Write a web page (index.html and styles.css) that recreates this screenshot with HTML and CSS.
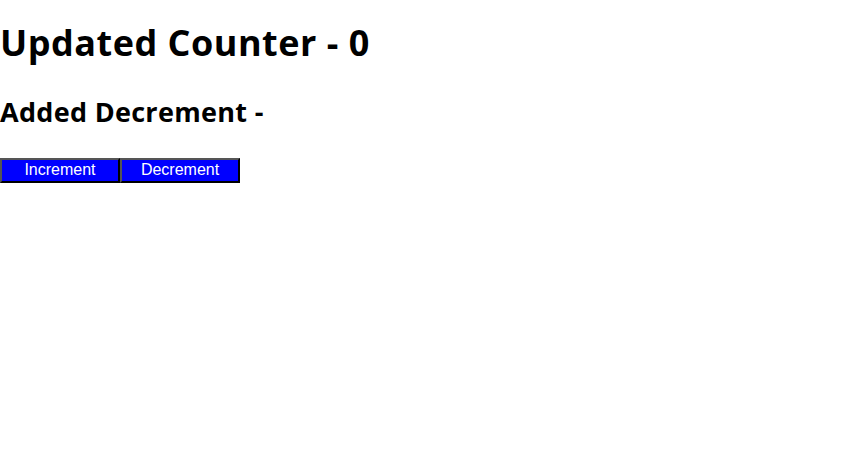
FILE: index.html
```html
<!DOCTYPE html>
<html>
<head>
<meta charset="utf-8">
<link rel="stylesheet" href="styles.css">
</head>
<body>
<div class="app">
<h1 class="title">Updated Counter - 0</h1>
<h2 class="subtitle">Added Decrement -</h2>
<div class="buttons"><button class="btn">Increment</button><button class="btn">Decrement</button></div>
</div>
</body>
</html>
```
FILE: styles.css
```css
html, body {
  margin: 0;
  padding: 0;
  background: #fff;
}
.app {
  font-family: "Open Sans", "Noto Sans", sans-serif;
  color: #000;
}
.title {
  font-size: 36px;
  font-weight: 700;
  letter-spacing: 0.5px;
  margin: 21px 0 0;
  line-height: 43px;
}
.subtitle {
  font-size: 27px;
  font-weight: 700;
  letter-spacing: 0.3px;
  margin: 32px 0 30px;
  line-height: 32px;
}
.buttons {
  display: flex;
}
.btn {
  width: 120px;
  height: 25px;
  margin: 0;
  padding: 0 0 2px;
  background: #0000ff;
  color: #fff;
  font-family: "Liberation Sans", Arial, sans-serif;
  font-size: 16px;
  border-width: 2px;
  border-style: solid;
  border-color: #555 #000 #000 #555;
}
```
